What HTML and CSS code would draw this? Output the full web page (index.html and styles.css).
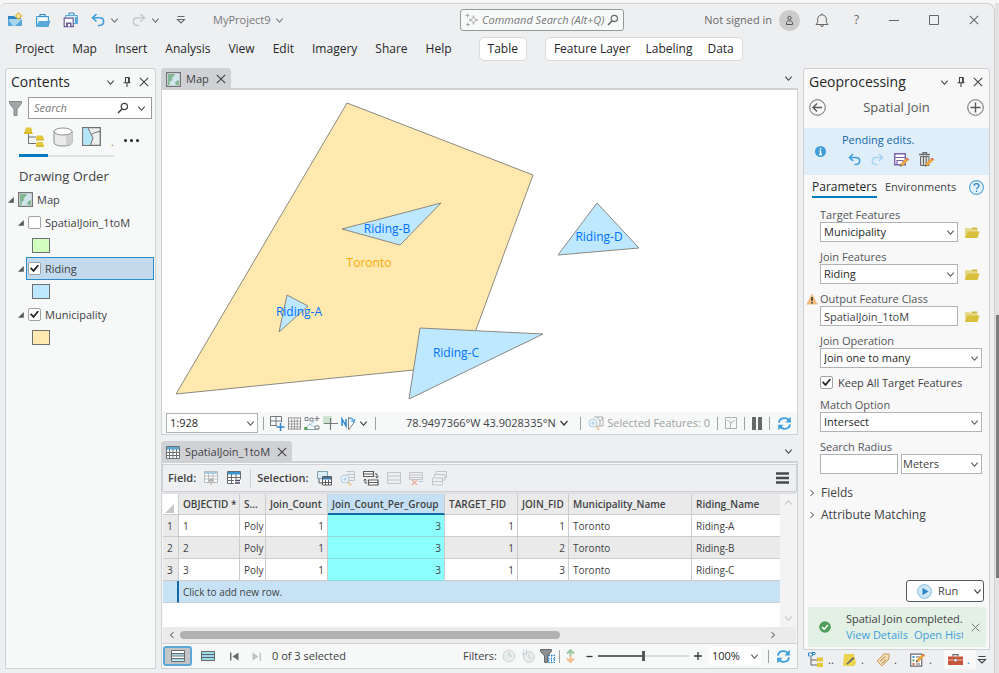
FILE: index.html
```html
<!DOCTYPE html>
<html lang="en">
<head>
    <meta charset="UTF-8">
    <meta name="viewport" content="width=device-width, initial-scale=1.0">
    <title>MyProject9 - Map</title>
    <link rel="stylesheet" href="styles.css">
</head>
<body>

<!-- Shared icons -->
<svg class="sprite" aria-hidden="true">
    <symbol id="chevron" viewBox="0 0 10 10"><path d="M1.5 3l3.5 4 3.5-4" fill="none" stroke="currentColor" stroke-width="1.2"/></symbol>
    <symbol id="close" viewBox="0 0 10 10"><path d="M.8.8l8.4 8.4M9.2.8L.8 9.2" fill="none" stroke="currentColor" stroke-width="1.1"/></symbol>
    <symbol id="pin" viewBox="0 0 10 12"><path d="M3 1.5h4.5M3.5 1.5v5M6.5 1.5v5M7.3 1.5v5M1.5 6.7h7M5 7v4" fill="none" stroke="currentColor" stroke-width="1.1"/></symbol>
    <symbol id="lens" viewBox="0 0 12 12"><circle cx="7.3" cy="4.5" r="3.2" fill="none" stroke="currentColor" stroke-width="1.2"/><path d="M5 7L1 11" stroke="currentColor" stroke-width="1.6"/></symbol>
    <symbol id="undo" viewBox="0 0 14 14"><path d="M5.5 1L1.5 4.8l4 3.7M1.8 4.8h6.7c5.5 0 5.5 7.2 0 7.7H7" fill="none" stroke="currentColor" stroke-width="1.6"/></symbol>
    <symbol id="redo" viewBox="0 0 14 14"><path d="M8.5 1l4 3.8-4 3.7M12.2 4.8H5.5c-5.5 0-5.5 7.2 0 7.7H7" fill="none" stroke="currentColor" stroke-width="1.5"/></symbol>
    <symbol id="refresh" viewBox="0 0 16 16"><path d="M2 7c.6-3.5 3-4.7 6-4.7 2.3 0 4 1 5 3M14 9c-.6 3.5-3 4.7-6 4.7-2.3 0-4-1-5-3" fill="none" stroke="#3f9fdc" stroke-width="2"/><path d="M14.8.8v6H9zM1.2 15.2v-6H7z" fill="#3f9fdc"/></symbol>
    <symbol id="folder" viewBox="0 0 16 13"><path d="M1 12V2h4.5L7 3.5h6.5V6" fill="#e6d98a"/><path d="M13 1.5H8l-1 2h6.5z" fill="#cdb93a"/><path d="M1 12l2.5-6.5h12l-2 6.5z" fill="#d8bf3c"/></symbol>
    <symbol id="map-icon" viewBox="0 0 15 15"><rect x=".7" y=".7" width="13.6" height="13.6" fill="#fff" stroke="#6d7073" stroke-width="1.3"/><path d="M2 2h11v11H2z" fill="#cfe6ee"/><path d="M2 2h7L8 4 5.5 6.5l1 1.5-3 2 .5 3H2zM10 13l-1-2.5L10.5 9 13 8v5z" fill="#84b793"/></symbol>
    <symbol id="grid" viewBox="0 0 14 14"><rect x=".5" y="1" width="13" height="12" fill="#fff" stroke="currentColor"/><path d="M.5 4.5h13M.5 7.5h13M.5 10.5h13M4 2v11M7 2v11M10 2v11" stroke="currentColor" stroke-width=".8"/></symbol>
    <symbol id="rows" viewBox="0 0 14 12"><path d="M.5.5h13v11H.5zM.5 4h13M.5 8h13" fill="none" stroke="currentColor"/></symbol>
    <symbol id="expand" viewBox="0 0 6 6"><path d="M5.8 0v5.8H0z" fill="#58595b"/></symbol>
    <symbol id="overflow" viewBox="0 0 10 10"><path d="M1.5 1.5h7M1.5 4.5L5 8l3.5-3.5z" fill="none" stroke="currentColor" stroke-width="1.1"/></symbol>
    <symbol id="pencil" viewBox="0 0 9 10"><path d="M6.5 1L1 6.5l-1 3 3-1L8.5 3z" fill="#efa53c"/><path d="M0 9.5l.7-2L2 9z" fill="#444"/><path d="M6 1.5l1-1 2 2-1 1z" fill="#d46a5a"/></symbol>
</svg>

<div class="desktop">
<div class="app">

    <header class="titlebar">
        <div class="quick-access">
            <button class="icon-btn" aria-label="New project"><svg width="16" height="16" viewBox="0 0 16 16"><path d="M1 4h6l1 1h6v9H1z" fill="#3186c5"/><path d="M2 7h12v7H2z" fill="#a9d6ef"/><path d="M1 7l5 7H1zM15 7v7H8z" fill="#58a8da"/><circle cx="11.5" cy="4" r="2.5" fill="#fbe8a0" stroke="#e1ad2f"/><path d="M11.5 0v1M11.5 7v1M7.5 4h1M14.5 4h1" stroke="#e1ad2f"/></svg></button>
            <button class="icon-btn" aria-label="Open project"><svg width="16" height="15" viewBox="0 0 16 15"><path d="M5 3V1.5h5V3" fill="none" stroke="#3186c5" stroke-width="1.2"/><path d="M1.5 3.5h12V13h-12z" fill="#d9edf8" stroke="#3b93d0"/><path d="M4 5h7v3H4z" fill="#fff"/><path d="M1 14l3-6h11.5L13 14z" fill="#58a8da"/></svg></button>
            <button class="icon-btn" aria-label="Save project"><svg width="16" height="16" viewBox="0 0 16 16"><path d="M6 3V1h5v2" fill="none" stroke="#3186c5"/><path d="M2.5 3.5h12v8h-12z" fill="#d9edf8" stroke="#58a8da"/><path d="M12 5h2.5v7H12z" fill="#58a8da"/><path d="M1.2 6.2h9v8.5h-9z" fill="#fff" stroke="#6c5b98" stroke-width="1.2"/><path d="M3 10.5h5.5v4H3z" fill="#6c5b98"/><path d="M5 12h2v2.5H5z" fill="#fff"/></svg></button>
            <button class="icon-btn blue" aria-label="Undo"><svg width="14" height="14"><use href="#undo"/></svg></button>
            <svg class="chev" width="9" height="9"><use href="#chevron"/></svg>
            <button class="icon-btn faded" aria-label="Redo"><svg width="14" height="14"><use href="#redo"/></svg></button>
            <svg class="chev" width="9" height="9"><use href="#chevron"/></svg>
            <button class="icon-btn customize" aria-label="Customize"><svg width="10" height="10"><use href="#overflow"/></svg></button>
            <button class="project-name">MyProject9 <svg width="9" height="9"><use href="#chevron"/></svg></button>
        </div>
        <div class="command-search">
            <svg width="14" height="14" viewBox="0 0 14 14"><path d="M8.5 2.5c.4 3 1.5 4 4.500 4.500-3 .5-4.100 1.500-4.500 4.500C8 8.500 7 7.500 4 7c3-.5 4-1.500 4.500-4.500z" fill="none" stroke="#aaa"/><path d="M2.5.5v4M.5 2.5h4M3 9.5v4M1 11.5h4" stroke="#aaa"/></svg>
            <input type="text" placeholder="Command Search (Alt+Q)" aria-label="Command Search">
            <svg width="12" height="12"><use href="#lens"/></svg>
        </div>
        <div class="account">
            <span class="signin">Not signed in</span>
            <span class="avatar"><svg width="11" height="11" viewBox="0 0 11 11"><circle cx="5.5" cy="3" r="1.7" fill="none" stroke="#555"/><path d="M2.5 9.5v-2C3 5.3 8 5.3 8.5 7.5v2z" fill="none" stroke="#555"/></svg></span>
            <button class="bar-btn" aria-label="Notifications"><svg width="14" height="15" viewBox="0 0 14 15"><path d="M1 11.5h12l-1.7-2.3V6C11.3.5 2.7.5 2.7 6v3.2zM5.5 12c0 2 3 2 3 0M7 2V.5" fill="none" stroke="#666"/></svg></button>
            <button class="bar-btn">?</button>
            <button class="win-btn" aria-label="Minimize"><svg width="10" height="10" viewBox="0 0 10 10"><path d="M0 5.5h10" stroke="#666"/></svg></button>
            <button class="win-btn" aria-label="Maximize"><svg width="10" height="10" viewBox="0 0 10 10"><path d="M.5.5h9v9h-9z" fill="none" stroke="#666"/></svg></button>
            <button class="win-btn" aria-label="Close"><svg width="10" height="10"><use href="#close"/></svg></button>
        </div>
    </header>

    <nav class="ribbon">
        <a href="#">Project</a>
        <a href="#">Map</a>
        <a href="#">Insert</a>
        <a href="#">Analysis</a>
        <a href="#">View</a>
        <a href="#">Edit</a>
        <a href="#">Imagery</a>
        <a href="#">Share</a>
        <a href="#">Help</a>
        <div class="tab-group first-group"><a href="#">Table</a></div>
        <div class="tab-group"><a href="#">Feature Layer</a><a href="#">Labeling</a><a href="#">Data</a></div>
    </nav>

    <main class="workspace">

        <!-- Contents -->
        <aside class="pane contents">
            <div class="pane-header">
                <h2>Contents</h2>
                <svg width="9" height="9"><use href="#chevron"/></svg>
                <svg width="10" height="12"><use href="#pin"/></svg>
                <svg width="10" height="10"><use href="#close"/></svg>
            </div>
            <div class="search-row">
                <svg width="13" height="15" viewBox="0 0 13 15"><path d="M.5.5h12v2L8 8v6.5H5V8L.5 2.5z" fill="#a3a5a8" stroke="#85878a"/></svg>
                <div class="search-box">
                    <input type="text" placeholder="Search" aria-label="Search">
                    <svg width="12" height="12"><use href="#lens"/></svg>
                    <svg width="9" height="9"><use href="#chevron"/></svg>
                </div>
            </div>
            <div class="list-tabs">
                <div class="views">
                    <button class="view active" aria-label="List by drawing order"><svg width="20" height="20" viewBox="0 0 20 20"><path d="M4.5 7v9.5H12M4.5 10H12" fill="none" stroke="#6f7173"/><path d="M1 3L2 .5h5L8 3v4H1zM12 10.5l1-2h5.5l1 2V13H12zM12 17l1-2h5.5l1 2v3H12z" fill="#e3c83b"/><path d="M0 5h8.5v2H0zM12 12h8v1.5h-8zM12 18.5h8V20h-8z" fill="#d6b92f"/></svg></button>
                    <button class="view" aria-label="List by data source"><svg width="20" height="20" viewBox="0 0 20 20"><path d="M1 4v12c1 4 17 4 18 0V4" fill="#eaeaea" stroke="#8d8f91"/><path d="M13 7v11.5c3-.5 5.5-1 6-2.5V4z" fill="#d0d0d0"/><ellipse cx="10" cy="4.5" rx="9" ry="3.5" fill="#fff" stroke="#8d8f91"/></svg></button>
                    <button class="view" aria-label="List by selection"><svg width="19" height="19" viewBox="0 0 19 19"><path d="M.7.7h17.6v17.6H.7z" fill="#eef0f0" stroke="#6f7173" stroke-width="1.3"/><path d="M1.3 1.3H6l4 8 1 2-2.5 6.5H1.3z" fill="#b3e7f8"/><path d="M6 1l5 10-2.5 7M9 8c2-2 5-3 9-3.5" fill="none" stroke="#6f7173"/></svg></button>
                    <span class="dot">.</span>
                </div>
                <button class="more" aria-label="More"><i></i><i></i><i></i></button>
            </div>
            <h3>Drawing Order</h3>
            <ul class="tree">
                <li class="row root"><svg width="6" height="6"><use href="#expand"/></svg><svg width="15" height="15"><use href="#map-icon"/></svg><span>Map</span></li>
                <li class="row"><svg width="6" height="6"><use href="#expand"/></svg><label><input type="checkbox"> SpatialJoin_1toM</label></li>
                <li class="row symbol"><span class="swatch green"></span></li>
                <li class="row"><svg width="6" height="6"><use href="#expand"/></svg><label class="selected"><input type="checkbox" checked> Riding</label></li>
                <li class="row symbol"><span class="swatch sky"></span></li>
                <li class="row"><svg width="6" height="6"><use href="#expand"/></svg><label><input type="checkbox" checked> Municipality</label></li>
                <li class="row symbol"><span class="swatch sand"></span></li>
            </ul>
        </aside>

        <div class="center">
            <!-- Map view -->
            <div class="tabstrip">
                <div class="doc-tab"><svg width="15" height="15"><use href="#map-icon"/></svg><span>Map</span><svg width="10" height="10"><use href="#close"/></svg></div>
                <svg width="9" height="9"><use href="#chevron"/></svg>
            </div>
            <section class="map-view">
                <svg class="map" viewBox="162 90 635 322" preserveAspectRatio="xMinYMin meet">
                    <g stroke="#8a8880">
                        <polygon points="347,103 533,175 463,365 176,394" fill="#ffe9af"/>
                        <polygon points="441,203 342,229 400,245" fill="#bee8ff"/>
                        <polygon points="287,295 308,306 279,332" fill="#bee8ff"/>
                        <polygon points="420,328 543,334 409,399" fill="#bee8ff"/>
                        <polygon points="597,203 639,248 558,255" fill="#bee8ff"/>
                    </g>
                    <text x="299" y="316">Riding-A</text>
                    <text x="387" y="233">Riding-B</text>
                    <text x="456" y="357">Riding-C</text>
                    <text x="599" y="241">Riding-D</text>
                    <text x="369" y="267" class="city">Toronto</text>
                </svg>
                <div class="map-status">
                    <div class="select scale">
                        <select aria-label="Map scale"><option>1:928</option></select>
                        <svg width="9" height="9"><use href="#chevron"/></svg>
                    </div>
                    <i class="sep"></i>
                    <svg width="15" height="15" viewBox="0 0 15 15"><path d="M.5.5h11v6M7 9.5H.5v-9M6 .5v9M.5 5h11" fill="none" stroke="#75777a"/><path d="M10.5 7v8M6.5 11h8" stroke="#2e86c8" stroke-width="1.5"/></svg>
                    <svg class="gray" width="13" height="13"><use href="#grid"/></svg>
                    <svg width="16" height="15" viewBox="0 0 16 15"><path d="M1 12L14 3M5 8l8 4" stroke="#58a8da" stroke-dasharray="1 1"/><path d="M1 1.5h3v3H1zM6 2h3v3H6zM11 10h4v3h-4z" fill="#fff" stroke="#808285"/><path d="M13 0v5M10.5 2.5h5" stroke="#808285"/><circle cx="1.8" cy="12.5" r="1.8" fill="#4f9d5b"/><path d="M3 13.5h12" stroke="#7fa0ae"/></svg>
                    <svg width="15" height="15" viewBox="0 0 15 15"><path d="M0 0h9v8H0z" fill="#cde5cf"/><path d="M7.5 2v12M1 7.5h14" stroke="#77797c" stroke-width="1.2"/></svg>
                    <svg width="15" height="15" viewBox="0 0 15 15"><path d="M1 10V3l4 7V3" fill="none" stroke="#2e86c8" stroke-width="1.5"/><path d="M7.5 1v13l6-8" fill="none" stroke="#808285"/><path d="M8 2c3 0 4 1 4.5 3M10 5l3 1 1-3" fill="none" stroke="#58a8da" stroke-width="1.3"/></svg>
                    <svg class="heavy" width="9" height="9"><use href="#chevron"/></svg>
                    <i class="sep wide"></i>
                    <span class="coords">78.9497366°W 43.9028335°N</span>
                    <svg class="heavy" width="10" height="10"><use href="#chevron"/></svg>
                    <div class="map-tools">
                        <i class="sep"></i>
                        <svg width="16" height="15" viewBox="0 0 16 15"><path d="M6 1h9v9H9M9 1l3 4 3-3M12 5v5" fill="none" stroke="#aaacae"/><circle cx="5" cy="7" r="4" fill="#f0f6fa" stroke="#a9cbe0"/><path d="M5 5v4M3 7h4" stroke="#a9cbe0"/><path d="M8 10l3 4" stroke="#e8c9a0" stroke-width="2"/></svg>
                        <span class="muted">Selected Features: 0</span>
                        <i class="sep"></i>
                        <svg width="12" height="12" viewBox="0 0 12 12"><path d="M.5.5h11v11H.5zM2 3l4 3 4-3M6 6l-1 5" fill="none" stroke="#b0b2b4"/></svg>
                        <i class="sep"></i>
                        <svg width="10" height="13" viewBox="0 0 10 13"><path d="M0 0h4v13H0zM6 0h4v13H6z" fill="#68696b"/></svg>
                        <i class="sep"></i>
                        <svg width="15" height="15"><use href="#refresh"/></svg>
                    </div>
                </div>
            </section>

            <!-- Attribute table -->
            <div class="tabstrip table-strip">
                <div class="doc-tab"><svg width="14" height="13" viewBox="0 0 14 13"><path d="M.5.5h13v12H.5z" fill="#fff" stroke="#6d7073"/><path d="M1 1h12v2.5H1z" fill="#58a8da"/><path d="M.5 6.5h13M.5 9.5h13M3.5 3v9.5M7 3v9.5M10.5 3v9.5" stroke="#6d7073"/></svg><span>SpatialJoin_1toM</span><svg width="10" height="10"><use href="#close"/></svg></div>
                <svg width="9" height="9"><use href="#chevron"/></svg>
            </div>
            <section class="table-view">
                <div class="table-tools">
                    <b>Field:</b>
                    <svg width="15" height="14" viewBox="0 0 15 14"><path d="M.5.5h13v11H.5zM.5 5h13M.5 8h13M4.5 1v10M9 1v10" fill="#fff" stroke="#b9bbbd"/><path d="M1 1h12v2H1z" fill="#a9cbe0"/><path d="M7 13.5V8M4.5 10.5L7 8l2.5 2.5" fill="none" stroke="#aaa" stroke-width="1.3"/></svg>
                    <svg width="15" height="14" viewBox="0 0 15 14"><path d="M.5.5h13v12H.5zM.5 6.5h13M.5 9.5h13M4.5 1v11M9 1v11" fill="#fff" stroke="#68696b"/><path d="M1 1h12v2.5H1z" fill="#3b93d0"/><path d="M7 8.5h7v5H7z" fill="#fff"/><path d="M8 9.5h5M8 12h5" stroke="#4a4560" stroke-width="1.3"/></svg>
                    <i class="sep"></i>
                    <b>Selection:</b>
                    <svg width="15" height="15" viewBox="0 0 15 15"><path d="M.5.5h10v7H.5z" fill="#d9edf8" stroke="#7fa0ae"/><path d="M2 8v4h3" fill="none" stroke="#58595b"/><path d="M5.5 5.5h9V14h-9z" fill="#fff" stroke="#58595b"/><path d="M6 6h8v2.5H6z" fill="#3b77a0"/><path d="M8.5 9v5M11.5 9v5M6 11.5h8" stroke="#58595b"/></svg>
                    <svg width="15" height="15" viewBox="0 0 15 15"><path d="M6 .5h8.5v9H9M7 3.5h7M8 6.5h6" fill="none" stroke="#c3c5c7"/><circle cx="5" cy="8" r="4" fill="#f0f6fa" stroke="#a9cbe0"/><path d="M5 6v4M3 8h4" stroke="#a9cbe0"/><path d="M8 11l3 3.5" stroke="#e8c9a0" stroke-width="2"/></svg>
                    <svg width="16" height="15" viewBox="0 0 16 15"><path d="M.5.5h10v5H.5zM.5 3h10M5.5 9H15v5H5.5zM5.5 11.5H15" fill="#fff" stroke="#58595b" stroke-width="1.2"/><path d="M12 3h2v4M12.5 5.5L14 7l1.5-1.5M4 12H2V8M.5 9.5L2 8l1.5 1.5" fill="none" stroke="#58595b"/></svg>
                    <svg class="light" width="14" height="12"><use href="#rows"/></svg>
                    <svg class="light" width="15" height="15" viewBox="0 0 15 15"><path d="M.5 8.5v-7h13v7zM.5 4h13M.5 6.5h13" fill="none" stroke="currentColor"/><path d="M3 9l5 5M8 9l-5 5" stroke="#eeb0a3" stroke-width="1.4"/><path d="M10 10.5h4" stroke="#a9cbe0"/></svg>
                    <svg class="light" width="15" height="15" viewBox="0 0 15 15"><path d="M4 3V.5h10.5v6H12M2.5 6V3.5H13V9h-2M.5 7h10v7H.5zM.5 10.5h10" fill="none" stroke="currentColor"/></svg>
                    <button class="icon-btn menu" aria-label="Table menu"><svg width="13" height="12" viewBox="0 0 13 12"><path d="M0 1.5h13M0 6h13M0 10.5h13" stroke="#48494b" stroke-width="2.4"/></svg></button>
                </div>
                <div class="grid-wrap">
                    <table>
                        <colgroup><col class="c-num"><col class="c-id"><col class="c-shape"><col class="c-count"><col class="c-group"><col class="c-target"><col class="c-join"><col class="c-muni"><col></colgroup>
                        <thead>
                            <tr><th class="corner"><svg width="9" height="9" viewBox="0 0 6 6"><path d="M6 0v6H0z" fill="#c5c7c9"/></svg></th><th>OBJECTID *</th><th>S...</th><th>Join_Count</th><th class="sorted">Join_Count_Per_Group</th><th>TARGET_FID</th><th>JOIN_FID</th><th>Municipality_Name</th><th>Riding_Name</th></tr>
                        </thead>
                        <tbody>
                            <tr><th>1</th><td>1</td><td>Poly</td><td class="num">1</td><td class="num hot">3</td><td class="num">1</td><td class="num">1</td><td>Toronto</td><td>Riding-A</td></tr>
                            <tr><th>2</th><td>2</td><td>Poly</td><td class="num">1</td><td class="num hot">3</td><td class="num">1</td><td class="num">2</td><td>Toronto</td><td>Riding-B</td></tr>
                            <tr><th>3</th><td>3</td><td>Poly</td><td class="num">1</td><td class="num hot">3</td><td class="num">1</td><td class="num">3</td><td>Toronto</td><td>Riding-C</td></tr>
                        </tbody>
                        <tfoot>
                            <tr><th></th><td colspan="8">Click to add new row.</td></tr>
                        </tfoot>
                    </table>
                    <div class="vscroll"><svg class="up" width="9" height="9"><use href="#chevron"/></svg><svg width="9" height="9"><use href="#chevron"/></svg></div>
                </div>
                <div class="hscroll">
                    <svg class="left" width="8" height="8"><use href="#chevron"/></svg>
                    <div class="track"><div class="thumb"></div></div>
                    <svg class="right-arrow" width="8" height="8"><use href="#chevron"/></svg>
                </div>
                <div class="table-status">
                    <button class="mode on" aria-label="Show all records"><svg width="14" height="12" viewBox="0 0 14 12"><path d="M.5.5h13v11H.5z" fill="#fff" stroke="#68696b"/><path d="M1 4.5h12M1 9.5h12" stroke="#9ad9ec" stroke-width="2"/><path d="M.5 3.5h13M.5 6h13M.5 8.5h13" stroke="#68696b"/></svg></button>
                    <button class="mode" aria-label="Show selected records"><svg width="14" height="10" viewBox="0 0 14 10"><path d="M.5.5h13v9H.5zM.5 3.5h13M.5 6.5h13" fill="#9ad9ec" stroke="#68696b"/></svg></button>
                    <button class="icon-btn step" aria-label="First record"><svg width="9" height="9" viewBox="0 0 9 9"><path d="M.7.5v8" stroke="#68696b" stroke-width="1.4"/><path d="M8.5.5v8l-6-4z" fill="#68696b"/></svg></button>
                    <button class="icon-btn step" aria-label="Last record"><svg width="9" height="9" viewBox="0 0 9 9"><path d="M8.3.5v8" stroke="#bfc1c3" stroke-width="1.4"/><path d="M.5.5v8l6-4z" fill="#bfc1c3"/></svg></button>
                    <span>0 of 3 selected</span>
                    <div class="filters">
                        <span>Filters:</span>
                        <svg width="14" height="14" viewBox="0 0 14 14"><circle cx="7" cy="7" r="6" fill="#e8eceb" stroke="#cfd4d6"/><path d="M7 3v4h3" fill="none" stroke="#b9cfc2"/></svg>
                        <svg width="14" height="14" viewBox="0 0 14 14"><circle cx="8" cy="8" r="5.5" fill="#e8eceb" stroke="#cfd4d6"/><path d="M2.5 0v6M5.5 0v6M1 4.5L2.5 6 4 4.5M8 5v4h3" fill="none" stroke="#c3d6de"/></svg>
                        <svg width="15" height="14" viewBox="0 0 15 14"><path d="M.5.5h11v1.7L7.5 7v6.5h-3V7l-4-4.8z" fill="#8d8f91" stroke="#68696b"/><path d="M8.5 6.5h6v7h-6z" fill="#fff" stroke="#2e86c8" stroke-width="1.4" stroke-dasharray="1.5 1"/><path d="M8 10h7M11.5 6v8" stroke="#2e86c8" stroke-dasharray="1.5 1"/></svg>
                        <i class="sep"></i>
                        <svg width="9" height="14" viewBox="0 0 9 14"><path d="M4.5 7V1M1 4.5L4.5 1 8 4.5" fill="none" stroke="#9ccaa4" stroke-width="2"/><path d="M4.5 6.5V13M1 9.5L4.5 13 8 9.5" fill="none" stroke="#f0bd8c" stroke-width="2"/></svg>
                    </div>
                    <div class="zoom">
                        <button class="icon-btn" aria-label="Zoom out"><svg width="7" height="7" viewBox="0 0 7 7"><path d="M.5 3.5h6" stroke="#333" stroke-width="1.3"/></svg></button>
                        <input type="range" min="0" max="100" value="50" aria-label="Zoom level">
                        <button class="icon-btn" aria-label="Zoom in"><svg width="8" height="8" viewBox="0 0 8 8"><path d="M0 4h8M4 0v8" stroke="#333" stroke-width="1.3"/></svg></button>
                    </div>
                    <div class="select percent">
                        <select aria-label="Zoom percent"><option>100%</option></select>
                        <svg width="9" height="9"><use href="#chevron"/></svg>
                    </div>
                    <i class="sep"></i>
                    <svg width="15" height="15"><use href="#refresh"/></svg>
                </div>
            </section>
        </div>

        <div class="right">
            <!-- Geoprocessing -->
            <aside class="pane geoprocessing">
                <div class="pane-header">
                    <h2>Geoprocessing</h2>
                    <svg width="9" height="9"><use href="#chevron"/></svg>
                    <svg width="10" height="12"><use href="#pin"/></svg>
                    <svg width="10" height="10"><use href="#close"/></svg>
                </div>
                <div class="tool-title">
                    <button class="icon-btn" aria-label="Back"><svg width="17" height="17" viewBox="0 0 17 17"><path d="M4 8.5h9M8 4.5l-4 4 4 4" fill="none" stroke="#58595b" stroke-width="1.4"/><circle cx="8.5" cy="8.5" r="7.8" fill="none" stroke="#68696b"/></svg></button>
                    <span>Spatial Join</span>
                    <button class="icon-btn" aria-label="Add"><svg width="17" height="17" viewBox="0 0 17 17"><path d="M3.5 8.5h10M8.5 3.5v10" stroke="#58595b" stroke-width="1.4"/><circle cx="8.5" cy="8.5" r="7.8" fill="none" stroke="#68696b"/></svg></button>
                </div>
                <div class="pending">
                    <svg width="11" height="11" viewBox="0 0 11 11"><circle cx="5.5" cy="5.5" r="5.5" fill="#3f9fdc"/><path d="M5.5 2v1.5M4.5 5h1v3M4 8.5h3" fill="none" stroke="#fff" stroke-width="1.4"/></svg>
                    <div class="pending-body">
                        <p>Pending edits.</p>
                        <div class="edit-tools">
                            <button class="icon-btn blue" aria-label="Undo edits"><svg width="13" height="13"><use href="#undo"/></svg></button>
                            <button class="icon-btn pale" aria-label="Redo edits"><svg width="13" height="13"><use href="#redo"/></svg></button>
                            <button class="icon-btn" aria-label="Save edits"><svg width="15" height="14" viewBox="0 0 15 14"><path d="M.7.7h10.6v11H.7z" fill="#fff" stroke="#7c62a8" stroke-width="1.4"/><path d="M1 4.5h10M3 7.5h6v4H3z" fill="none" stroke="#7c62a8" stroke-width="1.2"/><use href="#pencil" x="6" y="4" width="9" height="10"/></svg></button>
                            <button class="icon-btn" aria-label="Discard edits"><svg width="15" height="15" viewBox="0 0 15 15"><path d="M0 2.5h11M4 2V.7h3.5V2" fill="none" stroke="#68696b" stroke-width="1.3"/><path d="M1.5 4.5H10v9H1.5zM4.5 4.5v9M7.2 4.5v9" fill="#d5d6d7" stroke="#68696b"/><use href="#pencil" x="6" y="5" width="9" height="10"/></svg></button>
                        </div>
                    </div>
                </div>
                <div class="param-tabs">
                    <a href="#" class="active">Parameters</a>
                    <a href="#">Environments</a>
                    <button class="icon-btn" aria-label="Help"><svg width="15" height="15" viewBox="0 0 15 15"><circle cx="7.5" cy="7.5" r="6.9" fill="#e4f2fb" stroke="#58a8da" stroke-width="1.2"/><path d="M5 5.800c0-3 5-3 5 0 0 1.600-2.500 1.700-2.500 3.500M7.500 10.500v1.500" fill="none" stroke="#2e86c8" stroke-width="1.3"/></svg></button>
                </div>
                <form class="params">
                    <div class="field with-folder">
                        <label for="target">Target Features</label>
                        <div class="select"><select id="target"><option>Municipality</option></select><svg width="9" height="9"><use href="#chevron"/></svg></div>
                        <button type="button" class="icon-btn" aria-label="Browse"><svg width="16" height="13"><use href="#folder"/></svg></button>
                    </div>
                    <div class="field with-folder">
                        <label for="join">Join Features</label>
                        <div class="select"><select id="join"><option>Riding</option></select><svg width="9" height="9"><use href="#chevron"/></svg></div>
                        <button type="button" class="icon-btn" aria-label="Browse"><svg width="16" height="13"><use href="#folder"/></svg></button>
                    </div>
                    <div class="field with-folder">
                        <label for="output">Output Feature Class</label>
                        <svg class="warning" width="12" height="12" viewBox="0 0 12 12"><path d="M6 .5l5.700 11H.3z" fill="#f3bd7d"/><path d="M6 4v4M6 9v1.500" stroke="#333" stroke-width="1.5"/></svg>
                        <input type="text" id="output" value="SpatialJoin_1toM">
                        <button type="button" class="icon-btn" aria-label="Browse"><svg width="16" height="13"><use href="#folder"/></svg></button>
                    </div>
                    <div class="field">
                        <label for="operation">Join Operation</label>
                        <div class="select"><select id="operation"><option>Join one to many</option></select><svg width="9" height="9"><use href="#chevron"/></svg></div>
                    </div>
                    <label class="check"><input type="checkbox" checked> Keep All Target Features</label>
                    <div class="field">
                        <label for="match">Match Option</label>
                        <div class="select"><select id="match"><option>Intersect</option></select><svg width="9" height="9"><use href="#chevron"/></svg></div>
                    </div>
                    <div class="field radius">
                        <label for="radius">Search Radius</label>
                        <input type="text" id="radius">
                        <div class="select units"><select aria-label="Units"><option>Meters</option></select><svg width="9" height="9"><use href="#chevron"/></svg></div>
                    </div>
                </form>
                <button class="section"><svg width="8" height="8"><use href="#chevron"/></svg>Fields</button>
                <button class="section"><svg width="8" height="8"><use href="#chevron"/></svg>Attribute Matching</button>
                <button class="run">
                    <svg width="15" height="15" viewBox="0 0 15 15"><circle cx="7.5" cy="7.5" r="6.9" fill="#cfe7f7" stroke="#7fbde3"/><path d="M5.5 3.8l6 3.7-6 3.7z" fill="#2e86c8"/></svg>
                    <span>Run</span>
                    <svg class="heavy" width="9" height="9"><use href="#chevron"/></svg>
                </button>
                <div class="result">
                    <svg width="12" height="12" viewBox="0 0 12 12"><circle cx="6" cy="6" r="5.8" fill="#4f9d5b"/><path d="M3 6.2l2.2 2L9 4" fill="none" stroke="#fff" stroke-width="1.6"/></svg>
                    <div class="result-text">
                        <p>Spatial Join completed.</p>
                        <p class="links"><a href="#">View Details</a><a href="#">Open History</a></p>
                    </div>
                    <svg class="dismiss" width="9" height="9"><use href="#close"/></svg>
                </div>
            </aside>
            <div class="dock">
                <button class="dock-tab"><svg width="16" height="15" viewBox="0 0 16 15"><path d="M3 5v8h6M3 8h6" fill="none" stroke="#68696b"/><path d="M.5 1h4v3h-4zM4 .5h3v2H4z" fill="#fff" stroke="#2e86c8"/><path d="M9 5.5h6v4H9zM9 11h6v4H9z" fill="#e3c83b"/></svg>..</button>
                <button class="dock-tab"><svg width="15" height="14" viewBox="0 0 15 14"><path d="M2 1h10l2 9-2 3H1z" fill="#ecd44e"/><path d="M4 11L11 4l1.5 1.5-7 6z" fill="#666"/></svg>.</button>
                <button class="dock-tab"><svg width="14" height="14" viewBox="0 0 14 14"><path d="M1 8l7-7h5v5l-7 7z" fill="#f6dfb4" stroke="#c49a5a"/><path d="M4 8.5l5-5M6 10.5l4-4" stroke="#9a7a48"/></svg>.</button>
                <button class="dock-tab"><svg width="15" height="14" viewBox="0 0 15 14"><path d="M.7 1.2h11v12H.7z" fill="#fff" stroke="#68696b" stroke-width="1.2"/><path d="M2.5 3h2v2h-2z" fill="#3b93d0"/><path d="M2.5 6.5h2v2h-2z" fill="#4f9d5b"/><path d="M2.5 10h2v2h-2z" fill="#d05c3f"/><path d="M6 4h4M6 7.5h3M6 11h4" stroke="#68696b"/><use href="#pencil" x="6" y="0" width="9" height="10"/></svg>.</button>
                <button class="dock-tab active"><svg width="15" height="12" viewBox="0 0 15 12"><path d="M5 2.5V.7h5v1.8" fill="none" stroke="#68696b" stroke-width="1.2"/><path d="M0 2.5h15V11H0z" fill="#c8553a"/><path d="M0 6h15" stroke="#fff" stroke-width=".6"/><path d="M6 5h3v2.5H6z" fill="#fff" stroke="#68696b" stroke-width=".5"/></svg><em>.</em></button>
                <button class="dock-more" aria-label="More panes"><svg width="10" height="10"><use href="#overflow"/></svg></button>
            </div>
        </div>

    </main>
</div>
<div class="page-scroll"></div>
</div>

</body>
</html>
```

FILE: styles.css
```css
* {
    box-sizing: border-box;
}

body, html {
    margin: 0;
    padding: 0;
}

body {
    font-family: "Open Sans", "Noto Sans", sans-serif;
    font-size: 11px;
    line-height: 16px;
    white-space: nowrap;
    color: #404244;
    background-color: #f6f6f7;
}

h2, h3, p, ul {
    margin: 0;
    padding: 0;
    font-weight: normal;
}

a {
    color: inherit;
    text-decoration: none;
}

button, input, select {
    font: inherit;
    color: inherit;
    margin: 0;
    border-radius: 0;
}

button {
    padding: 0;
    border: none;
    background: none;
}

svg {
    flex: none;
    display: block;
}

.sprite {
    position: absolute;
    width: 0;
    height: 0;
}

.desktop {
    display: flex;
    min-height: 100vh;
    padding-top: 3px;
}

.app {
    flex: 1;
    min-width: 0;
    display: flex;
    flex-direction: column;
    background-color: #eeeff1;
    border-top: 1px solid #d0d1d3;
    border-right: 1px solid #d0d1d3;
    border-radius: 6px 8px 0 0;
}

.page-scroll {
    width: 4px;
    background: linear-gradient(#7c7c7c, #7c7c7c) 1px 312px / 3px 263px no-repeat #e2e2e3;
}

/* Title bar */
.titlebar {
    display: flex;
    align-items: center;
    height: 32px;
    color: #68696b;
    font-size: 12px;
}

.quick-access {
    flex: 1;
    display: flex;
    align-items: center;
    padding-left: 7px;
}

.icon-btn {
    display: flex;
    align-items: center;
    justify-content: center;
}

.quick-access .icon-btn {
    margin-right: 12px;
}

.quick-access .blue, .quick-access .faded {
    margin-right: 5px;
}

.quick-access .chev {
    margin-right: 13px;
}

.quick-access .customize {
    margin: 0 27px 0 3px;
}

.blue {
    color: #3f9fdc;
}

.pale {
    color: #a5d3f0;
}

.faded {
    color: #c5c7c9;
}

.project-name {
    display: flex;
    align-items: center;
    font-size: 11px;
    gap: 4px;
    color: #77797b;
}

.command-search {
    flex: 0 0 164px;
    min-width: 0;
    display: flex;
    align-items: center;
    height: 22px;
    padding: 0 4px;
    border: 1px solid #97999b;
    border-radius: 3px;
    background-color: #f8f9f9;
    font-size: 11px;
}

.command-search input, .search-box input {
    flex: 1;
    width: 0;
    min-width: 0;
    padding: 0;
    border: none;
    background: none;
    outline: none;
}

.command-search input {
    padding-left: 3px;
}

input::placeholder {
    color: #77797b;
    font-style: italic;
    opacity: 1;
}

.account {
    flex: 0 0 370px;
    display: flex;
    align-items: center;
    justify-content: flex-end;
}

.signin {
    font-size: 11px;
}

.avatar {
    display: flex;
    align-items: center;
    justify-content: center;
    width: 21px;
    height: 21px;
    margin: 0 4px 0 7px;
    border-radius: 50%;
    background-color: #cbcbcb;
}

.bar-btn, .win-btn {
    display: flex;
    align-items: center;
    justify-content: center;
    width: 35px;
    height: 28px;
}

.win-btn {
    width: 40px;
}

/* Ribbon */
.ribbon {
    display: flex;
    align-items: center;
    gap: 18px;
    height: 25px;
    margin-bottom: 7px;
    padding-left: 15px;
    font-size: 12px;
    color: #262728;
}

.tab-group {
    display: flex;
    gap: 15px;
    padding: 3px 8px;
    border: 1px solid #d9dadc;
    border-radius: 5px;
    background-color: #fff;
}

.first-group {
    margin-left: 9px;
}

/* Work area */
.workspace {
    flex: 1;
    display: grid;
    grid-template-columns: 151px minmax(0, 1fr) 187px;
    gap: 5px;
    padding: 0 4px 4px 5px;
}

.pane {
    border: 1px solid #cfd1d5;
    border-radius: 3px 3px 0 0;
    background-color: #f7f8f8;
}

.pane-header {
    display: flex;
    align-items: center;
    gap: 7px;
    height: 26px;
    padding: 0 6px 0 5px;
}

.pane-header h2 {
    flex: 1;
    font-size: 14px;
    color: #262728;
}

.search-row {
    display: flex;
    align-items: center;
    gap: 6px;
    padding: 2px 3px 0 3px;
}

.search-box {
    flex: 1;
    min-width: 0;
    display: flex;
    align-items: center;
    gap: 8px;
    height: 22px;
    padding: 0 5px;
    border: 1px solid #97999b;
    background-color: #fff;
}

.list-tabs {
    display: flex;
    align-items: center;
    margin: 0 13px 10px;
    height: 38px;
}

.views {
    display: flex;
    width: 95px;
    border-bottom: 2px solid #dedfe0;
}

.view {
    display: flex;
    align-items: center;
    justify-content: center;
    width: 29px;
    height: 37px;
    margin-bottom: -2px;
    border-bottom: 3px solid transparent;
}

.view.active {
    border-bottom-color: #007ac2;
}

.dot {
    margin: 14px 0 0 5px;
    color: #a58430;
}

.more {
    display: flex;
    gap: 3px;
    margin: 4px 0 0 10px;
}

.more i {
    width: 3px;
    height: 3px;
    border-radius: 50%;
    background-color: #262728;
}

.contents h3 {
    padding-left: 13px;
    font-size: 13px;
    line-height: 18px;
}

.tree {
    margin-top: 3px;
    list-style: none;
}

.row {
    display: flex;
    align-items: center;
    gap: 2px;
    height: 23px;
    padding: 0 1px 0 12px;
}

.root {
    gap: 4px;
    padding-left: 2px;
}

.symbol {
    padding-left: 26px;
}

.row label {
    flex: 1;
    display: flex;
    align-items: center;
    gap: 4px;
    height: 23px;
    padding-left: 1px;
    border: 1px solid transparent;
}

.row .selected {
    border-color: #2b8bc9;
    background-color: #c3daec;
}

.swatch {
    width: 18px;
    height: 15px;
    border: 1px solid #6e7072;
}

.green {
    background-color: #d3ffbe;
}

.sky {
    background-color: #bee8ff;
}

.sand {
    background-color: #ffe9af;
}

input[type="checkbox"] {
    appearance: none;
    display: flex;
    align-items: center;
    justify-content: center;
    width: 13px;
    height: 13px;
    border: 1px solid #a0a2a4;
    border-radius: 2px;
    background-color: #fff;
}

input[type="checkbox"]:checked::after {
    content: "";
    width: 9px;
    height: 8px;
    background-color: #262728;
    clip-path: polygon(0 50%, 14% 34%, 38% 62%, 86% 0, 100% 14%, 40% 96%);
}

/* Centre column */
.center {
    display: flex;
    flex-direction: column;
}

.tabstrip {
    display: flex;
    align-items: center;
    justify-content: space-between;
    height: 22px;
    border-bottom: 2px solid #d0d1d5;
    padding-right: 5px;
}

.doc-tab {
    display: flex;
    align-items: center;
    gap: 5px;
    height: 20px;
    padding: 2px 5px 0;
    border-radius: 3px 3px 0 0;
    background-color: #d0d1d5;
}

.doc-tab svg:last-child {
    margin-left: 2px;
}

.map-view {
    flex: 1;
    display: flex;
    flex-direction: column;
    border: 1px solid #d0d1d5;
    border-top: none;
    background-color: #fff;
}

.map {
    flex: 1;
    width: 100%;
    min-height: 0;
}

.map text {
    font-size: 12px;
    text-anchor: middle;
    fill: #0070ff;
}

.map .city {
    fill: #ffaa00;
}

.map-status {
    display: flex;
    align-items: center;
    gap: 3px;
    height: 22px;
    padding: 0 5px 0 4px;
    background-color: #f7f8f8;
}

.select {
    display: grid;
    grid-template-columns: minmax(0, 1fr) 9px;
    align-items: center;
    padding-right: 2px;
    border: 1px solid #b0b2b4;
    background-color: #fff;
    color: #55575a;
}

.select select {
    grid-area: 1 / 1 / 2 / 3;
    height: 18px;
    padding: 0 3px;
    border: none;
    background: none;
    appearance: none;
    outline: none;
    color: #262728;
}

.select svg {
    grid-area: 1 / 2;
    pointer-events: none;
}

.scale {
    flex: none;
    width: 92px;
}

.sep {
    flex: none;
    width: 1px;
    height: 13px;
    background-color: #a0a2a4;
}

.map-status .sep {
    margin: 0 3px 0 2px;
}

.map-status .wide {
    margin: 0 27px 0 4px;
}

.map-tools {
    display: flex;
    align-items: center;
    gap: 3px;
    margin-left: auto;
}

.map-status .map-tools .sep {
    margin: 0 4px;
}

.gray {
    color: #85878a;
}

.heavy {
    color: #333;
}

.muted {
    color: #a0a2a4;
}

.table-strip {
    margin-top: 6px;
}

/* Attribute table */
.table-view {
    border: 1px solid #d0d1d5;
    border-top: none;
    background-color: #f7f8f8;
}

.table-tools {
    display: flex;
    align-items: center;
    gap: 8px;
    height: 28px;
    margin-top: 1px;
    padding: 0 7px 0 5px;
    border: 1px solid #d0d1d5;
    background-color: #eeeff1;
}

.table-tools b {
    font-weight: 600;
}

.table-tools .sep {
    height: 19px;
    margin-right: -2px;
    background-color: #d0d1d5;
}

.table-tools .menu {
    margin-left: auto;
}

.light {
    color: #c3c5c7;
}

.grid-wrap {
    display: flex;
    height: 135px;
    margin: 0 1px;
    border-top: 2px solid #dfe0e1;
    background-color: #fff;
}

table {
    flex: 1;
    width: 0;
    align-self: flex-start;
    table-layout: fixed;
    border-collapse: separate;
    border-spacing: 0;
}

.c-num { width: 16px; }
.c-id { width: 61px; }
.c-shape { width: 26px; }
.c-count { width: 62px; }
.c-group { width: 117px; }
.c-target { width: 73px; }
.c-join { width: 51px; }
.c-muni { width: 123px; }

th, td {
    height: 22px;
    padding: 0 3px 0 4px;
    border-right: 1px solid #cbcccd;
    border-bottom: 1px solid #cbcccd;
    text-align: left;
    font-size: 10px;
    overflow: hidden;
}

thead th {
    height: 21px;
    background-color: #eaeaea;
    font-weight: 600;
}

thead .sorted {
    border-bottom: 2px solid #1468a8;
    background-color: #c5e0f5;
}

thead .corner {
    padding: 8px 2px 0;
    background-color: #fff;
}

tbody th, tfoot th {
    background-color: #eaeaea;
    font-weight: normal;
}

tbody tr:nth-child(2) td {
    background-color: #eaeaea;
}

tbody tr .num {
    text-align: right;
}

tbody tr td.hot {
    background-color: #8cffff;
    border-bottom-color: #8fdcdc;
}

th:last-child, td:last-child {
    border-right: none;
}

tfoot th, tfoot td {
    background-color: #c8e2f5;
}

tfoot th {
    border-right: 2px solid #1468a8;
}

.vscroll {
    display: flex;
    flex-direction: column;
    align-items: center;
    justify-content: space-between;
    width: 16px;
    padding: 4px 0;
    background-color: #f3f3f3;
    color: #c0c2c4;
}

.up {
    transform: rotate(180deg);
}

.left {
    transform: rotate(90deg);
}

.right-arrow {
    transform: rotate(-90deg);
}

.hscroll {
    display: flex;
    align-items: center;
    gap: 4px;
    height: 16px;
    margin: 0 1px;
    padding: 0 19px 0 5px;
    background-color: #ebebeb;
}

.track {
    flex: 1;
}

.thumb {
    width: 65%;
    height: 8px;
    border-radius: 4px;
    background-color: #b1b1b1;
}

.table-status {
    display: flex;
    align-items: center;
    gap: 7px;
    height: 25px;
    padding: 0 6px 0 1px;
    border-top: 1px solid #d0d1d5;
}

.mode {
    display: flex;
    align-items: center;
    justify-content: center;
    width: 29px;
    height: 20px;
}

.mode.on {
    border: 2px solid #5ba7d8;
    border-radius: 3px;
    background-color: #c4c5c7;
}

.mode + .mode {
    width: 18px;
}

.step {
    margin-left: 6px;
}

.step + span {
    margin-left: 4px;
}

.filters, .zoom {
    display: flex;
    align-items: center;
    gap: 5px;
}

.filters {
    margin-left: auto;
}

.filters .sep {
    margin: 0 1px 0 -1px;
}

.zoom {
    margin-left: 4px;
}

input[type="range"] {
    appearance: none;
    width: 91px;
    height: 12px;
    background: linear-gradient(90deg, #68696b 50%, #dcddde 50%) center / 100% 2px no-repeat;
}

input[type="range"]::-webkit-slider-thumb {
    appearance: none;
    width: 3px;
    height: 10px;
    background-color: #55575a;
}

.percent {
    width: 52px;
    border: none;
}

/* Right column */
.right {
    display: flex;
    flex-direction: column;
    min-width: 0;
}

.geoprocessing {
    flex: 1;
    display: flex;
    flex-direction: column;
    background-color: #f8f8f8;
}

.tool-title {
    display: flex;
    align-items: center;
    justify-content: space-between;
    height: 24px;
    margin-bottom: 9px;
    padding: 0 5px;
    font-size: 13px;
    color: #55575a;
}

.pending {
    display: flex;
    align-items: center;
    gap: 16px;
    height: 47px;
    padding: 0 11px;
    background-color: #dfeef9;
    color: #1468a8;
}

.pending-body {
    padding-bottom: 4px;
}

.edit-tools {
    display: flex;
    align-items: center;
    gap: 10px;
    margin: 4px 0 0 6px;
}

.param-tabs {
    display: flex;
    align-items: center;
    gap: 8px;
    height: 24px;
    padding: 0 5px 0 8px;
}

.param-tabs a {
    height: 22px;
    padding-top: 3px;
}

.param-tabs .active {
    border-bottom: 2px solid #007ac2;
    font-size: 12px;
    color: #262728;
}

.param-tabs button {
    margin-left: auto;
}

.params {
    display: grid;
    gap: 7px;
    padding: 8px 7px 0 16px;
}

.field {
    display: grid;
    grid-template-columns: minmax(0, 1fr);
    align-items: center;
    position: relative;
}

.with-folder {
    grid-template-columns: minmax(0, 1fr) 16px;
    column-gap: 6px;
    margin-right: 2px;
}

.radius {
    grid-template-columns: 78px minmax(0, 1fr);
    column-gap: 3px;
}

.field > label {
    grid-column: 1 / -1;
    line-height: 15px;
    color: #55575a;
}

.field > input {
    width: 100%;
    height: 20px;
    padding: 0 3px;
    border: 1px solid #b0b2b4;
    background-color: #fff;
    outline: none;
}

.units select {
    padding-left: 1px;
    color: #404244;
}

/* Sits in the margin, left of the label */
.warning {
    position: absolute;
    top: 2px;
    left: -14px;
}

.check {
    display: flex;
    align-items: center;
    gap: 5px;
    height: 15px;
}

.section {
    display: flex;
    align-items: center;
    gap: 5px;
    height: 22px;
    padding-left: 4px;
    font-size: 12px;
}

.geoprocessing form + .section {
    margin-top: 8px;
}

.section svg {
    transform: rotate(-90deg);
}

.run {
    display: flex;
    align-items: center;
    align-self: flex-end;
    gap: 6px;
    width: 78px;
    height: 22px;
    margin: auto 5px 5px 0;
    padding: 0 1px 0 10px;
    border: 1px solid #55575a;
    border-radius: 3px;
    background-color: #fff;
}

.run .heavy {
    margin-left: auto;
}

.result {
    display: flex;
    align-items: center;
    height: 40px;
    margin: 0 3px 2px 4px;
    padding: 0 6px 0 11px;
    background-color: #e3f0e4;
}

.result-text {
    flex: 1;
    min-width: 0;
    margin: 0 8px 0 15px;
    overflow: hidden;
}

.links {
    display: flex;
    gap: 6px;
    color: #3f9fdc;
}

.dismiss {
    color: #77797b;
}

.dock {
    display: flex;
    align-items: center;
    height: 19px;
    padding-left: 5px;
}

.dock-tab {
    display: flex;
    align-items: center;
    gap: 4px;
    width: 34px;
    height: 19px;
}

.dock-tab.active {
    width: 32px;
    padding-left: 4px;
    border-radius: 0 0 3px 3px;
    background-color: #f8f8f8;
}

.dock-tab em {
    font-style: normal;
    color: #007ac2;
}

.dock-more {
    margin-left: auto;
    padding-right: 3px;
}
```
